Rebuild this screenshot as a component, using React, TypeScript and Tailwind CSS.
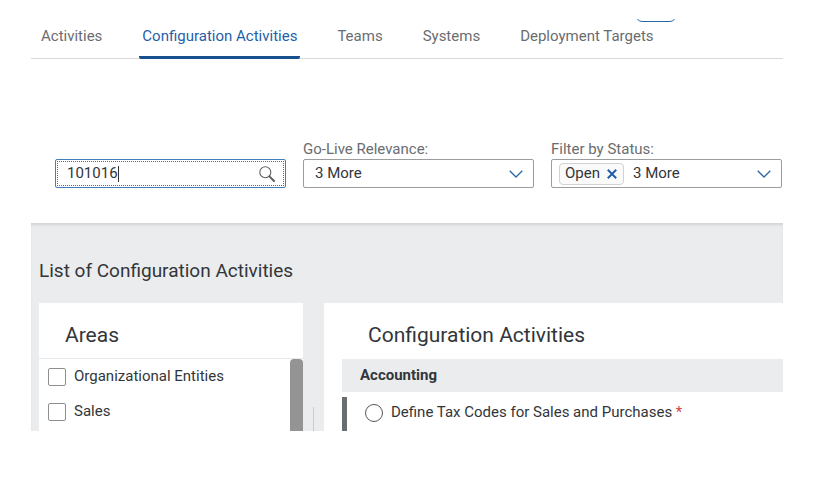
import React, { useState } from 'react';

const tabs = ['Activities', 'Configuration Activities', 'Teams', 'Systems', 'Deployment Targets'];
const areas = ['Organizational Entities', 'Sales'];

const ChevronIcon = () => (
  <svg
    viewBox="0 0 14 8"
    className="pointer-events-none w-3.5 h-2 text-[#2a68a8]"
    fill="none"
    stroke="currentColor"
    strokeWidth="1.3"
    aria-hidden="true"
  >
    <path d="M0.7 0.8 L7 7 L13.3 0.8" />
  </svg>
);

const TabBar: React.FC = () => {
  const [active, setActive] = useState('Configuration Activities');

  return (
    <nav className="flex h-10 gap-[34px] pl-[7px] border-b border-[#d9d9d9]">
      {tabs.map((tab) => (
        <button
          key={tab}
          type="button"
          onClick={() => setActive(tab)}
          className={`h-10 px-[3px] pb-0.5 border-b-3 rounded-b-xs whitespace-nowrap ${
            tab === active ? 'border-[#17508f] text-[#1f5fa8]' : 'border-transparent text-[#6a6d70]'
          }`}
        >
          {tab}
        </button>
      ))}
    </nav>
  );
};

const FilterBar: React.FC = () => {
  const [search, setSearch] = useState('101016');
  const [openToken, setOpenToken] = useState(true);

  return (
    <div className="grid grid-cols-3 items-end gap-[17px] pl-6 pr-px pt-20 pb-[35px]">
      {/* Search */}
      <div className="h-[29px] p-px border border-[#3f7fc0] rounded-xs">
        <div className="flex h-full items-center border border-dotted border-[#666] pl-[9px] pr-2">
          <input
            type="text"
            aria-label="Search"
            value={search}
            onChange={(e) => setSearch(e.target.value)}
            className="field-sizing-content max-w-44 bg-transparent outline-none caret-transparent"
          />
          <span className="w-px h-4 bg-[#32363a]" aria-hidden="true" />
          <button type="button" aria-label="Start search" className="ml-auto text-[#5a5d61]">
            <svg viewBox="0 0 16 16" className="w-4 h-4" fill="none" stroke="currentColor" aria-hidden="true">
              <circle cx="6.3" cy="6.3" r="5.5" strokeWidth="1.1" />
              <path d="M10.4 10.4 L15 15" strokeWidth="2" strokeLinecap="round" />
            </svg>
          </button>
        </div>
      </div>

      {/* Go-live relevance */}
      <div>
        <label htmlFor="relevance" className="block leading-5 text-[#6a6d70]">
          Go-Live Relevance:
        </label>
        <div className="flex h-[29px] items-center border border-[#9a9c9e] rounded-xs pr-2.5">
          <select id="relevance" className="grow h-full pl-[11px] -mr-3.5 appearance-none outline-none">
            <option>3 More</option>
          </select>
          <ChevronIcon />
        </div>
      </div>

      {/* Status */}
      <div>
        <label htmlFor="status" className="block leading-5 text-[#6a6d70]">
          Filter by Status:
        </label>
        <div className="flex h-[29px] items-center border border-[#9a9c9e] rounded-xs pl-[7px] pr-2.5">
          {openToken && (
            <span className="flex h-[22px] items-center gap-1.5 border border-[#d0d2d4] rounded-sm px-[5px] bg-[#fafafa]">
              Open
              <button type="button" aria-label="Remove Open" onClick={() => setOpenToken(false)} className="text-[#1f5fa8]">
                <svg viewBox="0 0 12 12" className="w-3 h-3" stroke="currentColor" strokeWidth="2" aria-hidden="true">
                  <path d="M1.8 1.8 L10.2 10.2 M10.2 1.8 L1.8 10.2" />
                </svg>
              </button>
            </span>
          )}
          <select id="status" className="grow h-full pl-[9px] -mr-3.5 appearance-none outline-none">
            <option>3 More</option>
          </select>
          <ChevronIcon />
        </div>
      </div>
    </div>
  );
};

const AreasPanel: React.FC = () => (
  <section className="w-66 shrink-0 bg-white">
    <h2 className="flex h-14 items-center pt-2.5 pl-[26px] text-[21px] border-b border-[#e8eaeb]">Areas</h2>
    <div className="flex">
      <ul className="grow pb-0.5">
        {areas.map((area) => (
          <li key={area}>
            <label className="flex h-[35px] items-center gap-2 pl-[9px]">
              <input
                type="checkbox"
                className="w-[18px] h-[18px] appearance-none border border-[#8c8f92] rounded-xs bg-white checked:bg-[#1f5fa8]"
              />
              {area}
            </label>
          </li>
        ))}
      </ul>
      <div className="w-[13px] rounded-t-sm bg-[#949494]" />
    </div>
  </section>
);

const ActivitiesPanel: React.FC = () => (
  <section className="grow bg-white pl-[18px]">
    <h2 className="flex h-14 items-center pt-2.5 pl-[26px] text-[21px]">Configuration Activities</h2>
    <h3 className="flex h-[33px] items-center pl-[18px] font-bold bg-[#ebecee]">Accounting</h3>
    <label className="mt-[5px] flex h-[34px] items-center gap-2 border-l-5 border-[#6a6d70] pl-[18px] pb-[3px]">
      <input
        type="radio"
        name="activity"
        className="w-[18px] h-[18px] appearance-none rounded-full border border-[#55585b] bg-white checked:border-5"
      />
      <span>
        Define Tax Codes for Sales and Purchases <span className="text-[#d04343]">*</span>
      </span>
    </label>
  </section>
);

const App: React.FC = () => (
  <div className="min-h-screen bg-white pt-[19px] pl-[31px] pr-[50px] pb-12 font-['Roboto',sans-serif] text-[15px] text-[#32363a]">
    <main className="relative overflow-hidden">
      <div className="absolute -top-5 right-[107px] w-10 h-[23px] rounded-md border border-[#2a68a8]" />
      <TabBar />
      <FilterBar />
      <div className="bg-[#ebecee] pl-2 shadow-[inset_0_3px_3px_-1px_#d2d3d5]">
        <h1 className="flex h-20 items-center pt-[17px] text-[19px]">List of Configuration Activities</h1>
        <div className="flex">
          <AreasPanel />
          <div className="flex w-[21px] shrink-0 items-end justify-center">
            <div className="w-px h-6 bg-[#c3cedb]" />
          </div>
          <ActivitiesPanel />
        </div>
      </div>
    </main>
  </div>
);

export default App;
